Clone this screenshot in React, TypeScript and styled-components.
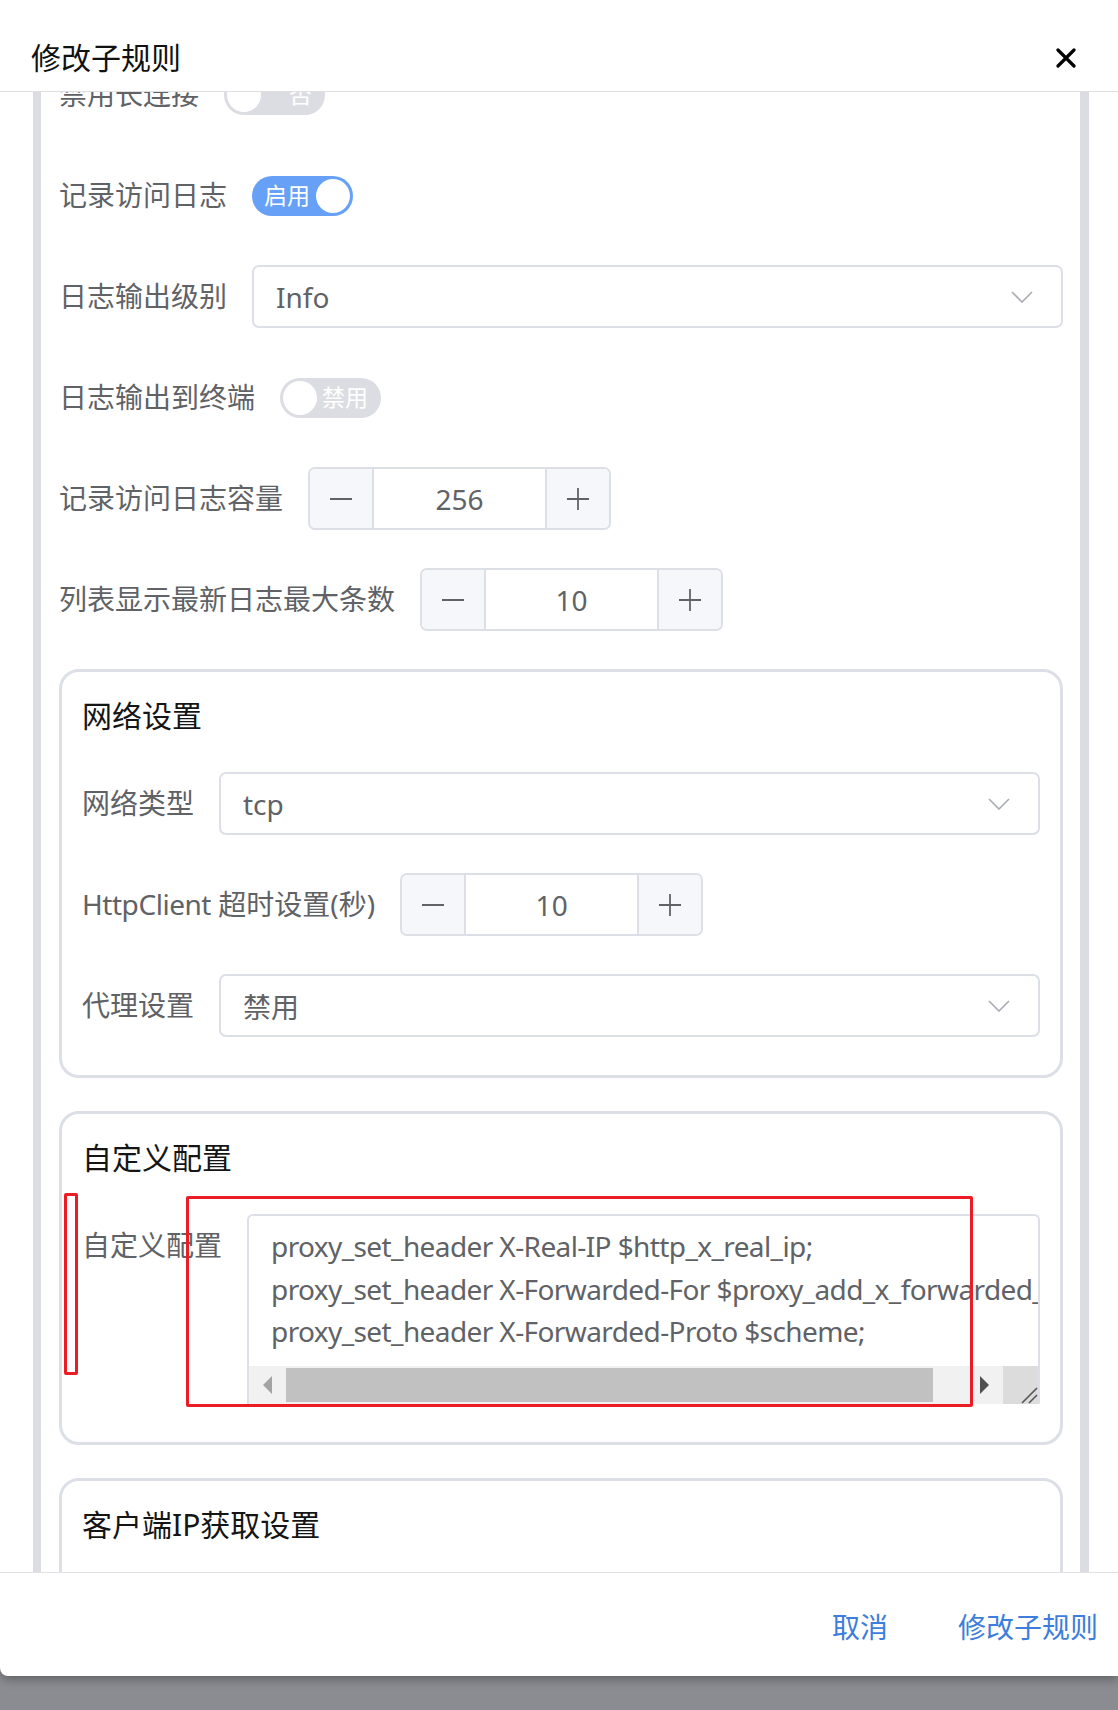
import React from 'react'
import styled, { createGlobalStyle } from 'styled-components'

const GlobalStyle = createGlobalStyle`
  html, body {
    margin: 0;
    padding: 0;
    background: #8a8c91;
    overflow: hidden;
  }
  * {
    box-sizing: border-box;
  }
`

const FONT = `"Noto Sans", "Noto Sans CJK SC", sans-serif`

const Page = styled.div`
  position: relative;
  width: 1118px;
  height: 1710px;
  font-family: ${FONT};
  background: #8a8c91;
`

const Dialog = styled.div`
  display: flex;
  flex-direction: column;
  width: 100%;
  height: 1676px;
  background: #fff;
  border-bottom-left-radius: 8px;
  box-shadow: 0 4px 10px rgba(0, 0, 0, 0.28);
  overflow: hidden;
`

const Header = styled.div`
  display: flex;
  align-items: center;
  justify-content: space-between;
  height: 92px;
  padding: 24px 42px 0 31px;
  border-bottom: 1px solid #dfdfe2;
  flex-shrink: 0;
`

const DialogTitle = styled.h1`
  margin: 0;
  font-size: 30px;
  font-weight: 400;
  line-height: 1;
  color: #111;
`

const CloseButton = styled.button`
  display: flex;
  align-items: center;
  justify-content: center;
  width: 20px;
  height: 20px;
  padding: 0;
  border: none;
  background: none;
`

const Body = styled.div`
  flex: 1;
  overflow: hidden;
`

const Scroller = styled.div`
  height: 100%;
  margin: 0 29px 0 33px;
  border-left: 8px solid #dcdde2;
  border-right: 9px solid #dcdde2;
  overflow: hidden;
`

const Form = styled.div`
  margin-top: -29px;
  padding: 0 17px 0 18px;
`

const FormItem = styled.div<{ $top?: boolean }>`
  display: flex;
  align-items: ${p => (p.$top ? 'flex-start' : 'center')};
  min-height: 63px;
  margin-bottom: 38px;
`

const Label = styled.label`
  flex-shrink: 0;
  padding-right: 25px;
  font-size: 28px;
  line-height: 63px;
  color: #606266;
  white-space: nowrap;
`

const Latin = styled.span`
  letter-spacing: -0.45px;
`

const Switch = styled.div<{ $on?: boolean }>`
  display: flex;
  align-items: center;
  flex-direction: ${p => (p.$on ? 'row' : 'row-reverse')};
  justify-content: space-between;
  width: 101px;
  height: 40px;
  padding: 0 ${p => (p.$on ? '3px' : '13px')} 0 ${p => (p.$on ? '12px' : '3px')};
  border-radius: 20px;
  background: ${p => (p.$on ? '#66a1f7' : '#dcdde2')};
`

const SwitchText = styled.span`
  font-size: 23px;
  line-height: 1;
  color: #fff;
`

const Knob = styled.span`
  width: 34px;
  height: 34px;
  border-radius: 50%;
  background: #fff;
`

const Select = styled.div`
  flex: 1;
  display: flex;
  align-items: center;
  justify-content: space-between;
  height: 63px;
  padding: 0 28px 0 22px;
  border: 2px solid #dcdfe6;
  border-radius: 7px;
  font-size: 28px;
  color: #606266;
`

const Stepper = styled.div`
  display: flex;
  width: 303px;
  height: 63px;
  border: 2px solid #dcdfe6;
  border-radius: 7px;
  overflow: hidden;
`

const StepButton = styled.div<{ $side: 'left' | 'right' }>`
  display: flex;
  align-items: center;
  justify-content: center;
  width: 64px;
  background: #f5f7fa;
  ${p => (p.$side === 'left' ? 'border-right: 2px solid #dcdfe6;' : 'border-left: 2px solid #dcdfe6;')}
`

const StepValue = styled.div`
  flex: 1;
  display: flex;
  align-items: center;
  justify-content: center;
  font-size: 28px;
  color: #606266;
`

const Card = styled.section`
  border: 3px solid #dcdfe6;
  border-radius: 20px;
  padding: 22px 20px 0 20px;
  margin-bottom: 33px;
`

const CardTitle = styled.h2`
  margin: 0 0 34px;
  font-size: 30px;
  font-weight: 400;
  line-height: 44px;
  color: #151515;
`

const TextBox = styled.div`
  flex: 1;
  display: flex;
  flex-direction: column;
  height: 190px;
  border: 2px solid #dcdfe6;
  border-bottom: none;
  border-radius: 6px 6px 0 0;
  overflow: hidden;
`

const TextContent = styled.div`
  height: 150px;
  padding: 9px 22px;
  font-size: 28px;
  line-height: 42.5px;
  letter-spacing: -0.6px;
  color: #606266;
  white-space: pre;
  overflow: hidden;
`

const ScrollBar = styled.div`
  display: flex;
  height: 38px;
  background: #f1f1f1;
`

const ScrollArrow = styled.div`
  display: flex;
  align-items: center;
  justify-content: center;
  width: 37px;
  flex-shrink: 0;
`

const Thumb = styled.div`
  width: 647px;
  margin: 2px 0;
  background: #c1c1c1;
`

const TrackRest = styled.div`
  flex: 1;
`

const Corner = styled.div`
  display: flex;
  align-items: flex-end;
  justify-content: flex-end;
  width: 35px;
  flex-shrink: 0;
  background: #dcdcdc;
`

const Footer = styled.div`
  display: flex;
  align-items: center;
  justify-content: flex-end;
  gap: 70px;
  height: 104px;
  padding: 2px 20px 0 0;
  border-top: 1px solid #e2e2e5;
  flex-shrink: 0;
`

const TextButton = styled.button`
  padding: 0;
  border: none;
  background: none;
  font-family: ${FONT};
  font-size: 28px;
  color: #3d7ddb;
`

const Annotation = styled.div`
  position: absolute;
  border: 3px solid #ec1c24;
  border-radius: 2px;
  pointer-events: none;
`

const Chevron = () => (
  <svg width='22' height='12' viewBox='0 0 22 12'>
    <path d='M1 1 L11 11 L21 1' fill='none' stroke='#a8abb2' strokeWidth='1.6' />
  </svg>
)

const Minus = () => (
  <svg width='22' height='22' viewBox='0 0 22 22'>
    <path d='M0 11 H22' stroke='#606266' strokeWidth='1.8' />
  </svg>
)

const Plus = () => (
  <svg width='22' height='22' viewBox='0 0 22 22'>
    <path d='M0 11 H22 M11 0 V22' stroke='#606266' strokeWidth='1.8' />
  </svg>
)

const NumberInput = ({ value }: { value: number }) => (
  <Stepper>
    <StepButton $side='left'><Minus /></StepButton>
    <StepValue>{value}</StepValue>
    <StepButton $side='right'><Plus /></StepButton>
  </Stepper>
)

const Toggle = ({ on, text }: { on?: boolean, text: string }) => (
  <Switch $on={on}>
    <SwitchText>{text}</SwitchText>
    <Knob />
  </Switch>
)

const CONFIG_TEXT = [
  'proxy_set_header X-Real-IP $http_x_real_ip;',
  'proxy_set_header X-Forwarded-For $proxy_add_x_forwarded_for;',
  'proxy_set_header X-Forwarded-Proto $scheme;'
].join('\n')

const App = () => {
  return (
    <Page>
      <GlobalStyle />
      <Dialog>
        <Header>
          <DialogTitle>修改子规则</DialogTitle>
          <CloseButton aria-label='close'>
            <svg width='20' height='20' viewBox='0 0 20 20'>
              <path d='M2 2 L18 18 M18 2 L2 18' stroke='#000' strokeWidth='3.2' strokeLinecap='round' />
            </svg>
          </CloseButton>
        </Header>
        <Body>
          <Scroller>
            <Form>
              <FormItem>
                <Label>禁用长连接</Label>
                <Toggle text='否' />
              </FormItem>
              <FormItem>
                <Label>记录访问日志</Label>
                <Toggle on text='启用' />
              </FormItem>
              <FormItem>
                <Label>日志输出级别</Label>
                <Select>Info<Chevron /></Select>
              </FormItem>
              <FormItem>
                <Label>日志输出到终端</Label>
                <Toggle text='禁用' />
              </FormItem>
              <FormItem>
                <Label>记录访问日志容量</Label>
                <NumberInput value={256} />
              </FormItem>
              <FormItem>
                <Label>列表显示最新日志最大条数</Label>
                <NumberInput value={10} />
              </FormItem>

              <Card>
                <CardTitle>网络设置</CardTitle>
                <FormItem>
                  <Label>网络类型</Label>
                  <Select>tcp<Chevron /></Select>
                </FormItem>
                <FormItem>
                  <Label><Latin>HttpClient</Latin> 超时设置(秒)</Label>
                  <NumberInput value={10} />
                </FormItem>
                <FormItem>
                  <Label>代理设置</Label>
                  <Select>禁用<Chevron /></Select>
                </FormItem>
              </Card>

              <Card>
                <CardTitle>自定义配置</CardTitle>
                <FormItem $top>
                  <Label>自定义配置</Label>
                  <TextBox>
                    <TextContent>{CONFIG_TEXT}</TextContent>
                    <ScrollBar>
                      <ScrollArrow>
                        <svg width='9' height='18' viewBox='0 0 9 18'>
                          <path d='M9 0 L0 9 L9 18 Z' fill='#a3a3a3' />
                        </svg>
                      </ScrollArrow>
                      <Thumb />
                      <TrackRest />
                      <ScrollArrow>
                        <svg width='9' height='18' viewBox='0 0 9 18'>
                          <path d='M0 0 L9 9 L0 18 Z' fill='#505050' />
                        </svg>
                      </ScrollArrow>
                      <Corner>
                        <svg width='20' height='20' viewBox='0 0 20 20'>
                          <path d='M4 19 L19 4 M11 19 L19 11' stroke='#555' strokeWidth='1.6' />
                        </svg>
                      </Corner>
                    </ScrollBar>
                  </TextBox>
                </FormItem>
              </Card>

              <Card>
                <CardTitle>客户端IP获取设置</CardTitle>
                <FormItem />
              </Card>
            </Form>
          </Scroller>
        </Body>
        <Footer>
          <TextButton>取消</TextButton>
          <TextButton>修改子规则</TextButton>
        </Footer>
      </Dialog>
      <Annotation style={{ left: 64, top: 1193, width: 14, height: 182 }} />
      <Annotation style={{ left: 186, top: 1196, width: 787, height: 211 }} />
    </Page>
  )
}

export default App
